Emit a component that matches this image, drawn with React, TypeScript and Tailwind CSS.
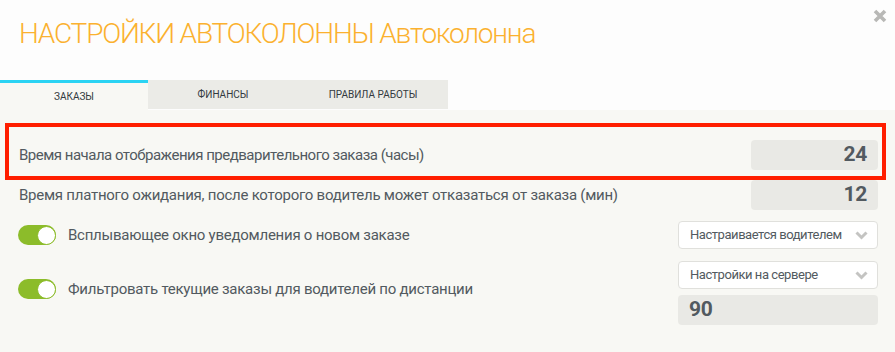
import React from "react";

const tabs = ["Заказы", "Финансы", "Правила работы"];

function Toggle() {
  return (
    <div className="w-[38px] h-[20px] rounded-full bg-[#8cbc2a] flex items-center justify-end shrink-0">
      <div className="w-[19px] h-[19px] rounded-full bg-white border border-[#8cbc2a]" />
    </div>
  );
}

function Chevron() {
  return (
    <svg width="13" height="9" viewBox="0 0 13 9" className="shrink-0">
      <path d="M1.5 1.5 L6.5 6.5 L11.5 1.5" fill="none" stroke="#c4c4c2" strokeWidth="3" />
    </svg>
  );
}

function Select({ label }: { label: string }) {
  return (
    <div className="w-[200px] h-[28px] bg-white border border-[#e0e0dc] rounded-[4px] flex items-center justify-between pl-[11px] pr-[9px] text-[13px] tracking-[-0.45px] whitespace-nowrap text-[#525a60]">
      <span>{label}</span>
      <Chevron />
    </div>
  );
}

function NumberBox({ value, left }: { value: string; left?: boolean }) {
  return (
    <div
      className={
        "h-[30px] bg-[#e9e9e5] rounded-[4px] flex items-center font-bold text-[21px] text-[#525a60] " +
        (left ? "w-[200px] justify-start pl-[11px]" : "w-[127px] justify-end pr-[11px]")
      }
    >
      {value}
    </div>
  );
}

export default function App() {
  return (
    <div className="w-[895px] h-[352px] relative overflow-hidden bg-[#f8f8f4] font-['Roboto','Liberation_Sans',sans-serif]">
      {/* Header */}
      <div className="h-[110px] bg-[#fdfdfd] flex flex-col">
        <div className="flex justify-between pl-[19px] pr-[8px] h-[80px]">
          <h1 className="mt-[20px] text-[28px] leading-[28px] font-light text-[#fbb12f] tracking-[-1.2px] whitespace-nowrap">
            НАСТРОЙКИ АВТОКОЛОННЫ Автоколонна
          </h1>
          <svg width="14" height="14" viewBox="0 0 14 14" className="mt-[9px]">
            <path d="M2 2 L12 12 M12 2 L2 12" stroke="#b8b8b6" strokeWidth="3.6" />
          </svg>
        </div>
        <div className="flex items-start h-[30px]">
          {tabs.map((t, i) => (
            <div
              key={t}
              className={
                "flex items-center justify-center uppercase text-[10px] text-[#333a40] " +
                (i === 0
                  ? "w-[148px] h-[30px] bg-[#f8f8f4] border-t-[3px] border-[#2bd3f3]"
                  : "w-[150px] h-[29px] bg-[#ebebe7]")
              }
            >
              {t}
            </div>
          ))}
        </div>
      </div>

      {/* Body */}
      <div className="flex flex-col pl-[19px] pr-[17px] pt-[30px] text-[15px] tracking-[-0.25px] text-[#525a60] whitespace-nowrap">
        <div className="flex items-center justify-between">
          <span className="tracking-[-0.5px]">Время начала отображения предварительного заказа (часы)</span>
          <NumberBox value="24" />
        </div>
        <div className="flex items-center justify-between mt-[10px]">
          <span>Время платного ожидания, после которого водитель может отказаться от заказа (мин)</span>
          <NumberBox value="12" />
        </div>
        <div className="flex items-center justify-between mt-[11px]">
          <div className="flex items-center gap-[12px] -ml-[1px]">
            <Toggle />
            <span>Всплывающее окно уведомления о новом заказе</span>
          </div>
          <Select label="Настраивается водителем" />
        </div>
        <div className="flex items-start justify-between mt-[12px]">
          <div className="flex items-center gap-[12px] -ml-[1px] mt-[17px]">
            <Toggle />
            <span>Фильтровать текущие заказы для водителей по дистанции</span>
          </div>
          <div className="flex flex-col gap-[6px]">
            <Select label="Настройки на сервере" />
            <NumberBox value="90" left />
          </div>
        </div>
      </div>

      {/* Annotation frame */}
      <div className="absolute left-[5px] top-[123px] w-[881px] h-[57px] border-[4px] border-[#ff1e00]" />
    </div>
  );
}
